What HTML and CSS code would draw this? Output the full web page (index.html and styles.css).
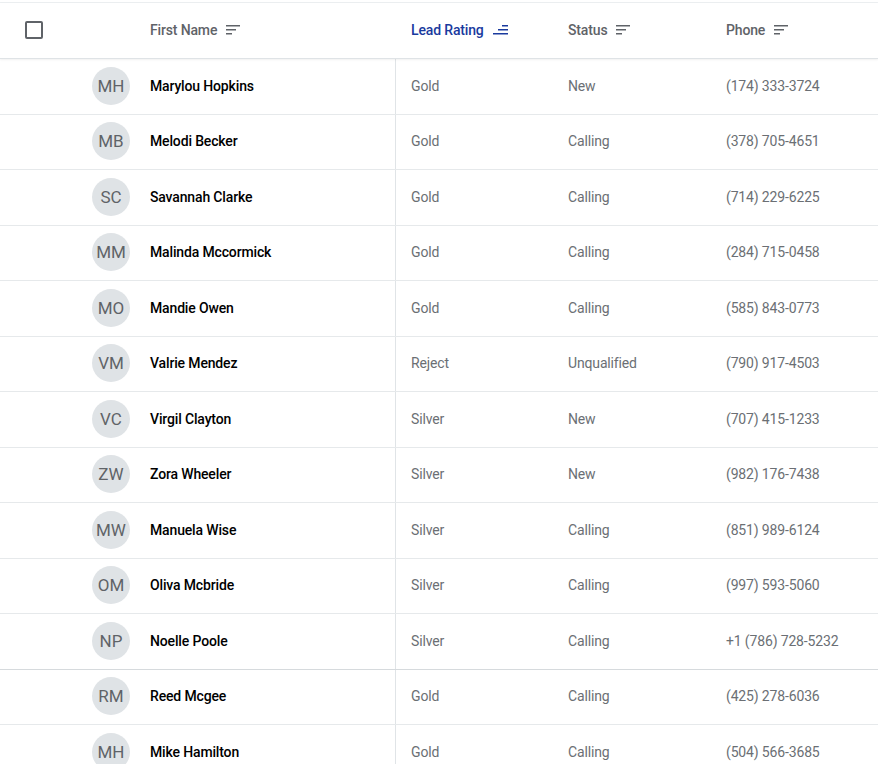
FILE: index.html
```html
<!DOCTYPE html>
<html lang="en">

<head>
    <meta charset="UTF-8">
    <meta name="viewport" content="width=device-width, initial-scale=1.0">
    <title>Leads</title>
    <link rel="stylesheet" href="styles.css">
</head>

<body>
    <div class="table">
        <div class="table-head">
            <div class="cell select"><span class="checkbox"></span></div>
            <div class="cell"></div>
            <div class="cell head-cell">First Name
                <svg class="sort-icon" width="14" height="10" viewBox="0 0 14 10"><rect x="0" y="0" width="14" height="1.5"/><rect x="0" y="4" width="10" height="1.5"/><rect x="0" y="8" width="6" height="1.5"/></svg>
            </div>
            <div class="cell head-cell active">Lead Rating
                <svg class="sort-icon" width="15" height="10" viewBox="0 0 15 10"><rect x="9" y="0" width="6" height="1.5"/><rect x="5" y="4" width="10" height="1.5"/><rect x="0" y="8" width="15" height="1.5"/></svg>
            </div>
            <div class="cell head-cell">Status
                <svg class="sort-icon" width="14" height="10" viewBox="0 0 14 10"><rect x="0" y="0" width="14" height="1.5"/><rect x="0" y="4" width="10" height="1.5"/><rect x="0" y="8" width="6" height="1.5"/></svg>
            </div>
            <div class="cell head-cell">Phone
                <svg class="sort-icon" width="14" height="10" viewBox="0 0 14 10"><rect x="0" y="0" width="14" height="1.5"/><rect x="0" y="4" width="10" height="1.5"/><rect x="0" y="8" width="6" height="1.5"/></svg>
            </div>
        </div>

        <div class="table-body">
            <div class="row"><div class="cell"></div><div class="cell avatar-cell"><span class="avatar">MH</span></div><div class="cell name">Marylou Hopkins</div><div class="cell rating">Gold</div><div class="cell">New</div><div class="cell">(174) 333-3724</div></div>
            <div class="row"><div class="cell"></div><div class="cell avatar-cell"><span class="avatar">MB</span></div><div class="cell name">Melodi Becker</div><div class="cell rating">Gold</div><div class="cell">Calling</div><div class="cell">(378) 705-4651</div></div>
            <div class="row"><div class="cell"></div><div class="cell avatar-cell"><span class="avatar">SC</span></div><div class="cell name">Savannah Clarke</div><div class="cell rating">Gold</div><div class="cell">Calling</div><div class="cell">(714) 229-6225</div></div>
            <div class="row"><div class="cell"></div><div class="cell avatar-cell"><span class="avatar">MM</span></div><div class="cell name">Malinda Mccormick</div><div class="cell rating">Gold</div><div class="cell">Calling</div><div class="cell">(284) 715-0458</div></div>
            <div class="row"><div class="cell"></div><div class="cell avatar-cell"><span class="avatar">MO</span></div><div class="cell name">Mandie Owen</div><div class="cell rating">Gold</div><div class="cell">Calling</div><div class="cell">(585) 843-0773</div></div>
            <div class="row"><div class="cell"></div><div class="cell avatar-cell"><span class="avatar">VM</span></div><div class="cell name">Valrie Mendez</div><div class="cell rating">Reject</div><div class="cell">Unqualified</div><div class="cell">(790) 917-4503</div></div>
            <div class="row"><div class="cell"></div><div class="cell avatar-cell"><span class="avatar">VC</span></div><div class="cell name">Virgil Clayton</div><div class="cell rating">Silver</div><div class="cell">New</div><div class="cell">(707) 415-1233</div></div>
            <div class="row"><div class="cell"></div><div class="cell avatar-cell"><span class="avatar">ZW</span></div><div class="cell name">Zora Wheeler</div><div class="cell rating">Silver</div><div class="cell">New</div><div class="cell">(982) 176-7438</div></div>
            <div class="row"><div class="cell"></div><div class="cell avatar-cell"><span class="avatar">MW</span></div><div class="cell name">Manuela Wise</div><div class="cell rating">Silver</div><div class="cell">Calling</div><div class="cell">(851) 989-6124</div></div>
            <div class="row"><div class="cell"></div><div class="cell avatar-cell"><span class="avatar">OM</span></div><div class="cell name">Oliva Mcbride</div><div class="cell rating">Silver</div><div class="cell">Calling</div><div class="cell">(997) 593-5060</div></div>
            <div class="row group-end"><div class="cell"></div><div class="cell avatar-cell"><span class="avatar">NP</span></div><div class="cell name">Noelle Poole</div><div class="cell rating">Silver</div><div class="cell">Calling</div><div class="cell">+1 (786) 728-5232</div></div>
            <div class="row"><div class="cell"></div><div class="cell avatar-cell"><span class="avatar">RM</span></div><div class="cell name">Reed Mcgee</div><div class="cell rating">Gold</div><div class="cell">Calling</div><div class="cell">(425) 278-6036</div></div>
            <div class="row"><div class="cell"></div><div class="cell avatar-cell"><span class="avatar">MH</span></div><div class="cell name">Mike Hamilton</div><div class="cell rating">Gold</div><div class="cell">Calling</div><div class="cell">(504) 566-3685</div></div>
        </div>
    </div>
</body>

</html>
```

FILE: styles.css
```css
body {
    margin: 0;
    font-family: Roboto, 'Liberation Sans', sans-serif;
    background: white;
    overflow: hidden;
}

.table {
    margin-top: 2px;
    border-top: 1px solid #eceff1;
}

.table-head,
.row {
    display: grid;
    grid-template-columns: 68px 82px 245px 157px 158px 1fr;
}

.table-head {
    height: 55px;
    border-bottom: 1px solid #dfe3e6;
    box-shadow: 0 1px 2px rgba(0, 0, 0, 0.06);
    position: relative;
    z-index: 1;
}

.cell {
    display: flex;
    align-items: center;
    font-size: 14px;
    letter-spacing: -0.15px;
    color: #6b6f74;
    white-space: nowrap;
    padding-bottom: 1px;
}

.table-head .cell:nth-child(n+4),
.row .cell:nth-child(n+4) {
    padding-left: 16px;
}

.select {
    justify-content: center;
}

.checkbox {
    width: 14px;
    height: 14px;
    border: 2px solid #5f6368;
    border-radius: 2px;
}

.head-cell {
    font-weight: 500;
    color: #5f6368;
}

.head-cell.active {
    color: #1a3a9e;
}

.sort-icon {
    margin-left: 9px;
    fill: #5f6368;
}

.active .sort-icon {
    fill: #1a3a9e;
}

.row {
    height: 54.5px;
    border-bottom: 1px solid #e6e9eb;
}

.row.group-end {
    border-bottom-color: #d6dadd;
}

.avatar-cell {
    padding-left: 24px;
}

.avatar {
    width: 38px;
    height: 38px;
    border-radius: 50%;
    background: #dfe3e6;
    color: #5f6368;
    font-size: 17px;
    letter-spacing: 0;
    display: flex;
    align-items: center;
    justify-content: center;
}

.name {
    color: #000;
    font-weight: 500;
}

.rating {
    border-left: 1px solid #e0e4e7;
    padding-left: 15px !important;
}
```
